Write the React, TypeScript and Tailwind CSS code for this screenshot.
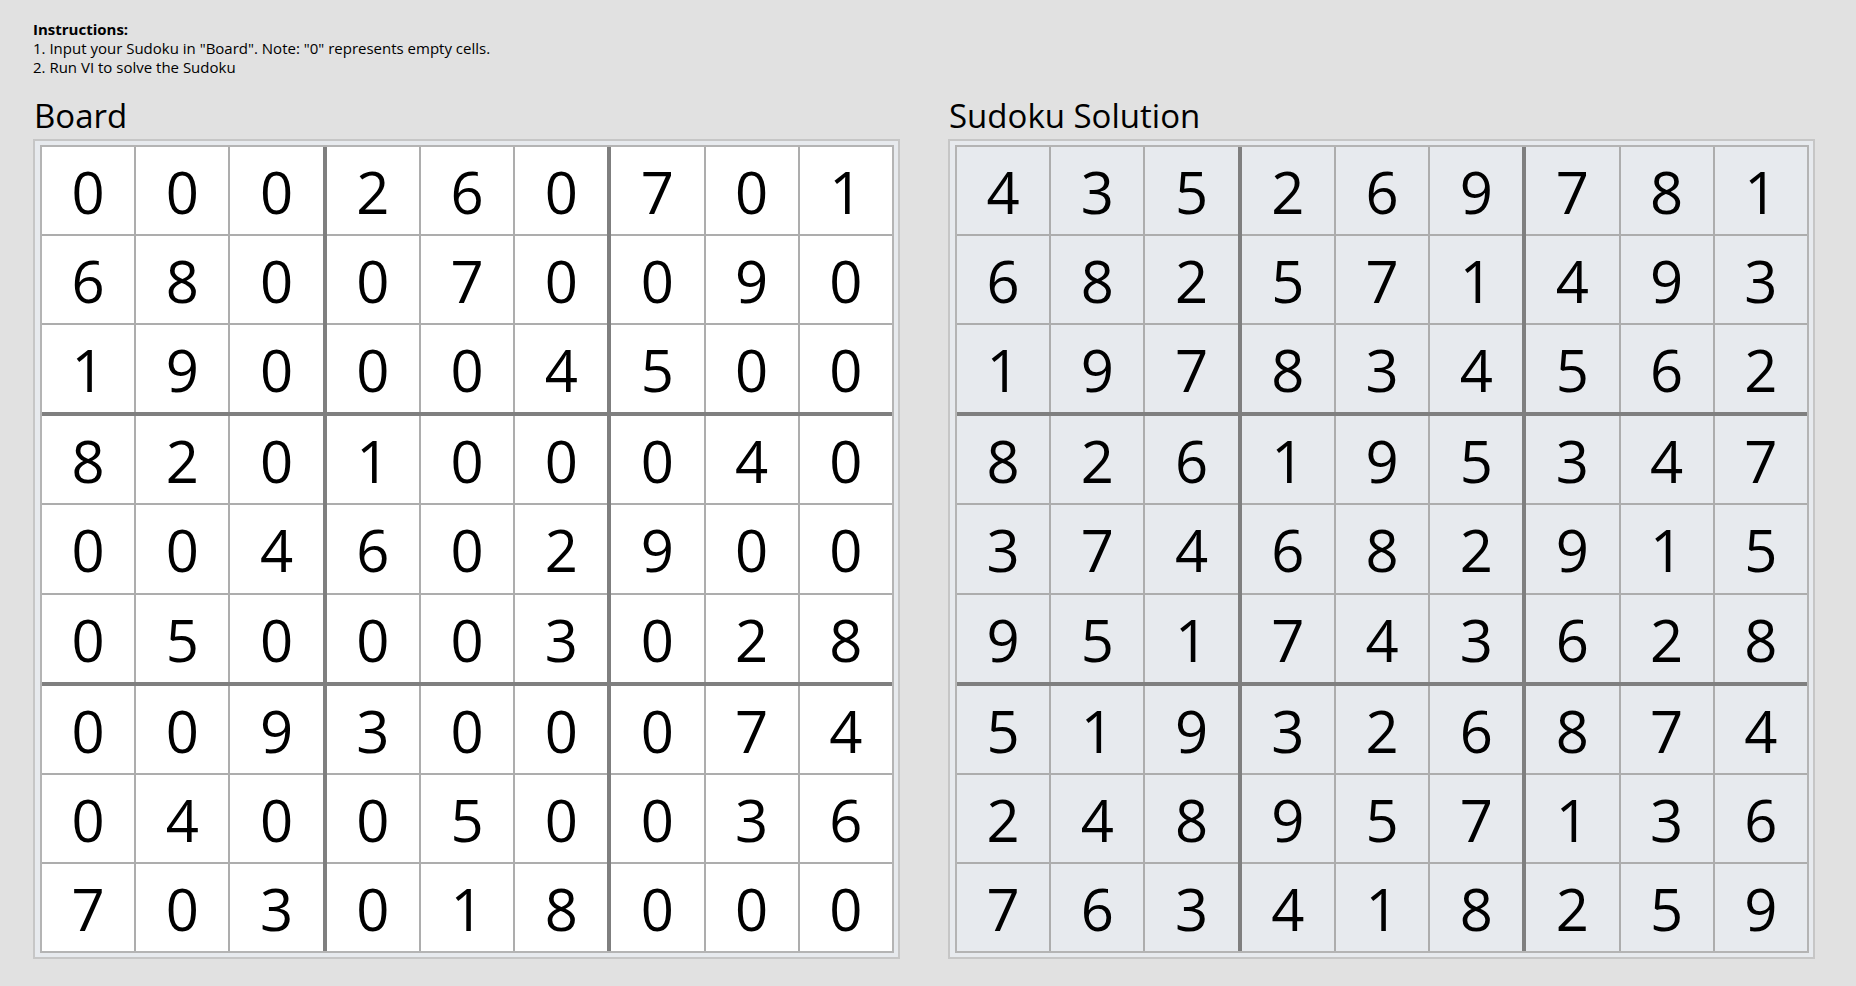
import React from 'react';

const board: number[][] = [
    [0, 0, 0, 2, 6, 0, 7, 0, 1],
    [6, 8, 0, 0, 7, 0, 0, 9, 0],
    [1, 9, 0, 0, 0, 4, 5, 0, 0],
    [8, 2, 0, 1, 0, 0, 0, 4, 0],
    [0, 0, 4, 6, 0, 2, 9, 0, 0],
    [0, 5, 0, 0, 0, 3, 0, 2, 8],
    [0, 0, 9, 3, 0, 0, 0, 7, 4],
    [0, 4, 0, 0, 5, 0, 0, 3, 6],
    [7, 0, 3, 0, 1, 8, 0, 0, 0],
];

const solution: number[][] = [
    [4, 3, 5, 2, 6, 9, 7, 8, 1],
    [6, 8, 2, 5, 7, 1, 4, 9, 3],
    [1, 9, 7, 8, 3, 4, 5, 6, 2],
    [8, 2, 6, 1, 9, 5, 3, 4, 7],
    [3, 7, 4, 6, 8, 2, 9, 1, 5],
    [9, 5, 1, 7, 4, 3, 6, 2, 8],
    [5, 1, 9, 3, 2, 6, 8, 7, 4],
    [2, 4, 8, 9, 5, 7, 1, 3, 6],
    [7, 6, 3, 4, 1, 8, 2, 5, 9],
];

const SudokuGrid = ({ title, values, readOnly }: { title: string, values: number[][], readOnly?: boolean }) => {
    const boxes = [0, 1, 2, 3, 4, 5, 6, 7, 8];

    return (
        <div className="flex flex-col">
            <div className="text-[33px] leading-[40px] text-black mb-[3px] pl-[1px]">{title}</div>
            <div className="w-[867px] border-2 border-[#c6c6c6] bg-[#e7eaee] pl-[5px] pr-[4px] py-[4px]">
                <div className="w-[854px] h-[808px] border-2 border-[#b4b4b4] bg-[#7f7f7f] grid grid-cols-3 grid-rows-3 gap-[4px]">
                    {boxes.map((b) => {
                        const br = Math.floor(b / 3) * 3;
                        const bc = (b % 3) * 3;
                        return (
                            <div key={b} className="grid grid-cols-3 grid-rows-3 gap-[2px] bg-[#adadad]">
                                {[0, 1, 2].flatMap((r) =>
                                    [0, 1, 2].map((c) => (
                                        <div
                                            key={`${r}-${c}`}
                                            className={`flex items-center justify-center pt-[3px] text-[58px] leading-none text-black ${readOnly ? 'bg-[#e7eaee]' : 'bg-white'}`}
                                        >
                                            {values[br + r][bc + c]}
                                        </div>
                                    ))
                                )}
                            </div>
                        );
                    })}
                </div>
            </div>
        </div>
    );
};

export default function App() {
    return (
        <div
            className="w-[1856px] h-[986px] bg-[#e1e1e1] pl-[33px] pt-[20px]"
            style={{ fontFamily: '"Open Sans", "Noto Sans", sans-serif' }}
        >
            <div className="text-[15px] leading-[19px] text-black">
                <div className="font-bold">Instructions:</div>
                <div>1. Input your Sudoku in "Board". Note: "0" represents empty cells.</div>
                <div>2. Run VI to solve the Sudoku</div>
            </div>
            <div className="flex gap-[48px] mt-[19px]">
                <SudokuGrid title="Board" values={board} />
                <SudokuGrid title="Sudoku Solution" values={solution} readOnly />
            </div>
        </div>
    );
}
